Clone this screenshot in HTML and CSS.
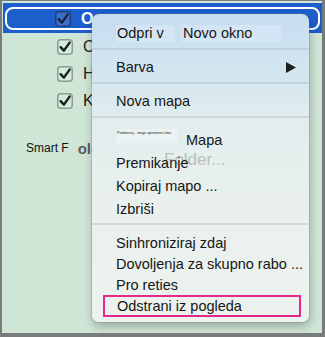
FILE: index.html
```html
<!DOCTYPE html>
<html>
<head>
<meta charset="utf-8">
<link rel="stylesheet" href="styles.css">
</head>
<body>
<div class="window">
  <div class="list">
    <div class="row selected">
      <div class="sel-frame">
        <span class="check check-sel"><svg width="16" height="16" viewBox="0 0 16 16"><rect x="0.75" y="0.75" width="14.5" height="14.5" rx="3" fill="#3d6fc4" stroke="#23407e" stroke-width="1.5"/><path d="M3.6 8.2 L6.9 11.6 L12.6 3.6" fill="none" stroke="#16244a" stroke-width="2.4" stroke-linecap="round" stroke-linejoin="round"/></svg></span>
        <span class="name name-sel">O</span>
      </div>
    </div>
    <div class="row">
      <span class="check"><svg width="16" height="16" viewBox="0 0 16 16"><rect x="0.75" y="0.75" width="14.5" height="14.5" rx="3" fill="#d6eadc" stroke="#8c9c92" stroke-width="1.5"/><path d="M3.6 8.2 L6.9 11.6 L12.6 3.6" fill="none" stroke="#14201a" stroke-width="2.4" stroke-linecap="round" stroke-linejoin="round"/></svg></span>
      <span class="name">C</span>
    </div>
    <div class="row">
      <span class="check"><svg width="16" height="16" viewBox="0 0 16 16"><rect x="0.75" y="0.75" width="14.5" height="14.5" rx="3" fill="#d6eadc" stroke="#8c9c92" stroke-width="1.5"/><path d="M3.6 8.2 L6.9 11.6 L12.6 3.6" fill="none" stroke="#14201a" stroke-width="2.4" stroke-linecap="round" stroke-linejoin="round"/></svg></span>
      <span class="name">H</span>
    </div>
    <div class="row">
      <span class="check"><svg width="16" height="16" viewBox="0 0 16 16"><rect x="0.75" y="0.75" width="14.5" height="14.5" rx="3" fill="#d6eadc" stroke="#8c9c92" stroke-width="1.5"/><path d="M3.6 8.2 L6.9 11.6 L12.6 3.6" fill="none" stroke="#14201a" stroke-width="2.4" stroke-linecap="round" stroke-linejoin="round"/></svg></span>
      <span class="name">K</span>
    </div>
    <div class="smart">
      <span class="smart-label">Smart F</span>
      <span class="smart-name">old</span>
    </div>
  </div>

  <div class="menu">
    <div class="mi mi-big open-row">
      <span class="hl hl-odpri">Odpri v</span>
      <span class="hl hl-novo">Novo okno</span>
    </div>
    <div class="sep"></div>
    <div class="mi mi-big sub">
      <span>Barva</span>
      <svg class="arrow" width="10" height="11" viewBox="0 0 10 11"><polygon points="0,0 10,5.5 0,11" fill="#1e1e1e"/></svg>
    </div>
    <div class="sep"></div>
    <div class="mi mi-big">Nova mapa</div>
    <div class="sep"></div>
    <div class="rename">
      <span class="rename-box">Poimenuj - mapi spremeni ime.</span>
      <span class="rename-label">Mapa</span>
      <span class="ghost">Folder...</span>
    </div>
    <div class="mi mi-mid">Premikanje</div>
    <div class="mi mi-mid">Kopiraj mapo ...</div>
    <div class="mi mi-mid">Izbriši</div>
    <div class="sep sep-low"></div>
    <div class="mi mi-low">Sinhroniziraj zdaj</div>
    <div class="mi mi-low">Dovoljenja za skupno rabo ...</div>
    <div class="mi mi-low">Pro reties</div>
    <div class="mi mi-marked">Odstrani iz pogleda</div>
  </div>
</div>
</body>
</html>
```

FILE: styles.css
```css
html, body {
  margin: 0;
  padding: 0;
  background: #cfe5d6;
}

.window {
  position: relative;
  width: 325px;
  height: 337px;
  box-sizing: border-box;
  border-style: solid;
  border-color: #7a7c7b;
  border-width: 1px 3px 4px 2px;
  background: #cfe5d6;
  font-family: "Liberation Sans", Arial, sans-serif;
  overflow: hidden;
}

.list {
  display: flex;
  flex-direction: column;
}

.row {
  display: flex;
  align-items: center;
  height: 27px;
  padding-left: 55px;
  gap: 10px;
}

.row.selected {
  height: 30px;
  margin: 2px 0 0 1px;
  padding: 4px 2px 3px 2px;
  box-sizing: border-box;
  background: #1d5ecd;
}

.sel-frame {
  flex: 1;
  height: 100%;
  box-sizing: border-box;
  border: 2px solid #ffffff;
  border-radius: 8px;
  display: flex;
  align-items: center;
  padding-left: 48px;
  gap: 10px;
}

.check {
  display: flex;
  width: 16px;
  height: 16px;
}

.name {
  font-size: 16px;
  color: #18221c;
  line-height: 16px;
}

.name-sel {
  color: #ffffff;
  font-weight: bold;
}

.smart {
  display: flex;
  align-items: center;
  height: 20px;
  margin-top: 24px;
  padding-left: 24px;
  gap: 9px;
}

.smart-label {
  font-size: 12px;
  color: #111;
}

.smart-name {
  font-size: 15px;
  font-weight: bold;
  color: #5a5e5c;
}

/* context menu */
.menu {
  position: absolute;
  left: 90px;
  top: 13px;
  width: 217px;
  height: 308px;
  box-sizing: border-box;
  padding-top: 6px;
  border-radius: 7px;
  z-index: 1;
  background: linear-gradient(180deg, #c6ddf1 0%, #d2e5f0 17%, #e0ecee 33%, #e8f0ed 55%, #edf2ee 100%);
  box-shadow: 0 0 0 1px rgba(110, 130, 120, 0.25), 1px 4px 10px rgba(0, 0, 0, 0.28);
  font-size: 14.5px;
  color: #161616;
}

.mi {
  display: flex;
  align-items: center;
  padding-left: 24px;
  white-space: nowrap;
}

.mi-big { height: 26px; }
.mi-mid { height: 23px; }
.mi-low { height: 21px; }

.open-row {
  padding-left: 24px;
}

.hl {
  display: block;
  height: 17px;
  line-height: 17px;
  background: rgba(225, 238, 250, 0.45);
}

.hl-odpri {
  width: 58px;
  padding-left: 1px;
}

.hl-novo {
  margin-left: 6px;
  width: 98px;
  padding-left: 2px;
}

.sub {
  justify-content: space-between;
  padding-right: 13px;
}

.sep {
  height: 2px;
  margin: 2px 0 4px;
  background: rgba(160, 175, 180, 0.35);
}

.sep-low {
  margin: 3px 0 7px;
}

.rename {
  position: relative;
  height: 29px;
  display: flex;
  align-items: flex-start;
  padding-left: 24px;
}

.rename-box {
  margin-top: 7px;
  width: 61px;
  height: 14px;
  box-sizing: border-box;
  padding: 1px 1px;
  font-size: 4px;
  line-height: 5px;
  color: #222;
  background: rgba(255, 255, 255, 0.3);
  white-space: nowrap;
}

.rename-label {
  margin-top: 11px;
  margin-left: 9px;
  line-height: 14px;
}

.ghost {
  position: absolute;
  left: 72px;
  top: 28px;
  font-size: 17px;
  color: #b9bfbd;
  z-index: -1;
}

.mi-marked {
  height: 22px;
  margin-left: 11px;
  width: 198px;
  box-sizing: border-box;
  border: 2px solid #e5298a;
  padding-left: 12px;
}
```
